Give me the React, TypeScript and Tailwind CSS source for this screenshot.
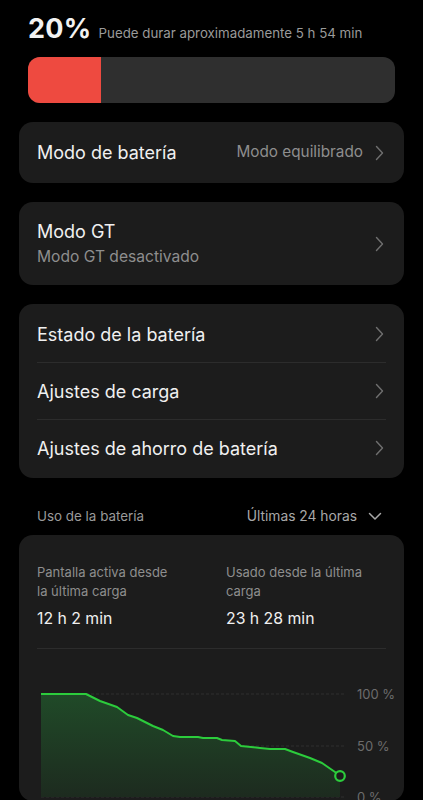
import React from 'react';

const font = { fontFamily: 'Inter, "Noto Sans", sans-serif' };

const Chevron: React.FC = () => (
  <svg width="9" height="16" viewBox="0 0 9 16" className="shrink-0">
    <path d="M1.5 1.5 L7.5 8 L1.5 14.5" fill="none" stroke="#6f6f6f" strokeWidth="1.4" strokeLinecap="round" strokeLinejoin="round" />
  </svg>
);

const ChevronDown: React.FC = () => (
  <svg width="14" height="9" viewBox="0 0 14 9" className="shrink-0">
    <path d="M1.5 1.5 L7 7 L12.5 1.5" fill="none" stroke="#a8a8a8" strokeWidth="1.5" strokeLinecap="round" strokeLinejoin="round" />
  </svg>
);

const Row: React.FC<{ title: string }> = ({ title }) => (
  <div className="h-[56px] flex items-center justify-between pl-[18px] pr-[20px]">
    <span className="text-[18px] text-[#f0f0f0]">{title}</span>
    <Chevron />
  </div>
);

// battery level samples, in chart coordinates
const points: [number, number][] = [
  [4, 45], [49, 45], [63, 52], [80, 58], [91, 66], [100, 69], [116, 77], [126, 81],
  [136, 87], [143, 88], [161, 88], [166, 89], [180, 89], [185, 91], [198, 92], [204, 97],
  [223, 99], [233, 100], [248, 100], [256, 103], [273, 109], [285, 114], [298, 123], [303, 127],
];

const UsageChart: React.FC = () => {
  const line = points.map(([x, y]) => `${x},${y}`).join(' ');
  const area = `4,148 ${line} 303,148`;
  return (
    <svg width="367" height="152" viewBox="0 0 367 152" className="block -mr-[18px]">
      <defs>
        <linearGradient id="fill" x1="0" y1="0" x2="0" y2="1">
          <stop offset="0%" stopColor="#204a28" />
          <stop offset="100%" stopColor="#1d2b1f" />
        </linearGradient>
      </defs>
      {[45, 97, 148].map(y => (
        <line key={y} x1="4" x2="308" y1={y} y2={y} stroke="#2e2e2e" strokeWidth="1" strokeDasharray="3 2" />
      ))}
      <polygon points={area} fill="url(#fill)" />
      <polyline points={line} fill="none" stroke="#2ccc3c" strokeWidth="2" strokeLinejoin="round" />
      <circle cx="303" cy="127" r="4.8" fill="#1c1c1c" stroke="#2ccc3c" strokeWidth="2.2" />
      <text x="320" y="50" fill="#6c6c6c" fontSize="13" style={font}>100 %</text>
      <text x="320" y="102" fill="#6c6c6c" fontSize="13" style={font}>50 %</text>
      <text x="320" y="153" fill="#6c6c6c" fontSize="13" style={font}>0 %</text>
    </svg>
  );
};

export default function App() {
  return (
    <div className="h-[800px] overflow-hidden bg-black px-[19px] pt-[15px]" style={font}>
      <div className="flex items-baseline gap-[7px] pl-[9px] h-[36px]">
        <span className="text-[27px] font-bold text-[#f2f2f2] leading-none tracking-[0.3px]">20%</span>
        <span className="text-[13.3px] text-[#9a9a9a]">Puede durar aproximadamente 5 h 54 min</span>
      </div>

      <div className="mx-[9px] mt-[6px] h-[46px] rounded-[12px] bg-[#2f2f2f] overflow-hidden flex">
        <div className="h-full bg-[#ee4a40]" style={{ width: '20%' }} />
      </div>

      <div className="mt-[19px] h-[61px] rounded-[14px] bg-[#1c1c1c] flex items-center justify-between pl-[18px] pr-[20px]">
        <span className="text-[18px] text-[#f0f0f0]">Modo de batería</span>
        <div className="flex items-center gap-[12px]">
          <span className="text-[15.3px] text-[#8e8e8e]">Modo equilibrado</span>
          <Chevron />
        </div>
      </div>

      <div className="mt-[19px] h-[83px] rounded-[14px] bg-[#1c1c1c] flex items-center justify-between pl-[18px] pr-[20px]">
        <div className="flex flex-col">
          <span className="text-[18px] text-[#f0f0f0] leading-[26px]">Modo GT</span>
          <span className="text-[15.6px] text-[#8e8e8e] leading-[24px]">Modo GT desactivado</span>
        </div>
        <Chevron />
      </div>

      <div className="mt-[19px] rounded-[14px] bg-[#1c1c1c] py-[2px]">
        <Row title="Estado de la batería" />
        <div className="mx-[18px] h-px bg-[#2c2c2c]" />
        <Row title="Ajustes de carga" />
        <div className="mx-[18px] h-px bg-[#2c2c2c]" />
        <Row title="Ajustes de ahorro de batería" />
      </div>

      <div className="mt-[20px] h-[37px] flex items-center justify-between pl-[18px] pr-[22px]">
        <span className="text-[13.4px] text-[#9a9a9a]">Uso de la batería</span>
        <div className="flex items-center gap-[11px]">
          <span className="text-[13.8px] text-[#a8a8a8]">Últimas 24 horas</span>
          <ChevronDown />
        </div>
      </div>

      <div className="rounded-[14px] bg-[#1c1c1c] pt-[28px] px-[18px]">
        <div className="grid grid-cols-[189px_1fr]">
          <div>
            <div className="text-[13px] leading-[19px] text-[#8e8e8e]">Pantalla activa desde<br />la última carga</div>
            <div className="mt-[6px] text-[15.8px] leading-[24px] text-[#f0f0f0]">12 h 2 min</div>
          </div>
          <div>
            <div className="text-[13px] leading-[19px] text-[#8e8e8e]">Usado desde la última<br />carga</div>
            <div className="mt-[6px] text-[15.8px] leading-[24px] text-[#f0f0f0]">23 h 28 min</div>
          </div>
        </div>
        <div className="mt-[17px] h-px bg-[#2c2c2c]" />
        <UsageChart />
      </div>
    </div>
  );
}
